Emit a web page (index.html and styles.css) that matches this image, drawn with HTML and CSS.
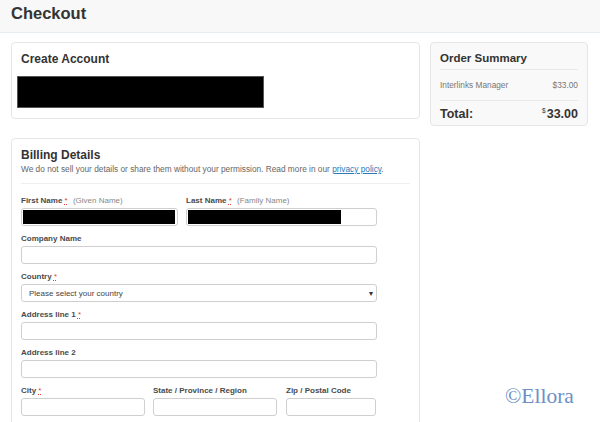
FILE: index.html
```html
<!DOCTYPE html>
<html>
<head>
<meta charset="utf-8">
<link rel="stylesheet" href="styles.css">
</head>
<body>
<header class="topbar"><h1>Checkout</h1></header>
<main class="layout">
  <div class="col-main">
    <section class="card account">
      <h2>Create Account</h2>
      <div class="redact"></div>
    </section>
    <section class="card billing">
      <h2>Billing Details</h2>
      <p class="note">We do not sell your details or share them without your permission. Read more in our <a href="#">privacy policy</a>.</p>
      <hr class="sep">
      <div class="fields">
        <div class="row names">
          <div class="field"><label>First Name <abbr>*</abbr> <span class="hint">(Given Name)</span></label><div class="input"><div class="redact-in"></div></div></div>
          <div class="field"><label>Last Name <abbr>*</abbr> <span class="hint">(Family Name)</span></label><div class="input"><div class="redact-in short"></div></div></div>
        </div>
        <div class="field"><label>Company Name</label><div class="input"></div></div>
        <div class="field"><label>Country <abbr>*</abbr></label><div class="input select"><span>Please select your country</span><span class="caret">▾</span></div></div>
        <div class="field"><label>Address line 1 <abbr>*</abbr></label><div class="input"></div></div>
        <div class="field"><label>Address line 2</label><div class="input"></div></div>
        <div class="row city">
          <div class="field"><label>City <abbr>*</abbr></label><div class="input"></div></div>
          <div class="field"><label>State / Province / Region</label><div class="input"></div></div>
          <div class="field"><label>Zip / Postal Code</label><div class="input"></div></div>
        </div>
      </div>
    </section>
  </div>
  <aside class="col-side">
    <section class="card summary">
      <h2>Order Summary</h2>
      <div class="line item"><span>Interlinks Manager</span><span>$33.00</span></div>
      <div class="line total"><span>Total:</span><span><sup>$</sup>33.00</span></div>
    </section>
  </aside>
</main>
<div class="watermark">©Ellora</div>
</body>
</html>
```
FILE: styles.css
```css
* { box-sizing: border-box; }
html, body { margin: 0; padding: 0; }
body {
  width: 600px;
  height: 422px;
  overflow: hidden;
  background: #fff;
  font-family: "Liberation Sans", Arial, sans-serif;
  color: #333;
  position: relative;
}
.topbar {
  height: 33px;
  background: #f8f8f8;
  border-bottom: 1px solid #e7ecf0;
  padding: 3px 11px 0;
}
.topbar h1 {
  margin: 0;
  font-size: 16.5px;
  line-height: 20px;
  font-weight: bold;
  color: #333;
}
.layout {
  display: flex;
  gap: 10px;
  padding: 9px 11px 0;
}
.col-main { width: 409px; display: flex; flex-direction: column; gap: 19px; }
.col-side { width: 158px; }
.card {
  border: 1px solid #e6e6e6;
  border-radius: 4px;
  background: #fff;
  padding: 8px 9px 10px;
}
.card h2 {
  margin: 0;
  font-size: 12px;
  line-height: 16px;
  font-weight: bold;
  color: #333;
}
.account { height: 77px; }
.redact {
  margin: 9px 0 0 -4px;
  width: 247px;
  height: 32px;
  background: #000;
  border: 1px solid #555;
}
.billing { height: 300px; }
.note {
  margin: 0;
  font-size: 8.3px;
  line-height: 12px;
  color: #666;
  white-space: nowrap;
}
.note a { color: #2a7ab8; text-decoration: underline; }
.sep {
  border: 0;
  border-top: 1px solid #eee;
  margin: 8px 0 0;
}
.fields {
  width: 356px;
  display: flex;
  flex-direction: column;
  gap: 6px;
  padding-top: 10px;
}
.row { display: grid; gap: 8px; }
.names { grid-template-columns: 157px 191px; }
.city { grid-template-columns: 124px 124px 91px; gap: 8px; }
.city .field:last-child { margin-left: 1px; }
.field { display: flex; flex-direction: column; gap: 1px; }
label {
  display: block;
  font-size: 8px;
  line-height: 13px;
  font-weight: bold;
  color: #4a4a4a;
  white-space: nowrap;
}
abbr {
  color: #d9443a;
  text-decoration: underline dotted;
  font-weight: normal;
}
.hint { font-weight: normal; color: #888; margin-left: 3px; }
.input {
  height: 18px;
  border: 1px solid #cfcfcf;
  border-radius: 3px;
  background: #fff;
  position: relative;
}
.redact-in {
  position: absolute;
  left: 1px; top: 1px; bottom: 1px;
  width: 152px;
  background: #000;
}
.redact-in.short { width: 153px; }
.select {
  display: flex;
  align-items: center;
  justify-content: space-between;
  padding: 0 3px 0 7px;
  font-size: 8px;
  color: #444;
}
.caret { font-size: 8px; color: #333; }
.summary {
  background: #f9f9f9;
  height: 84px;
  padding: 7px 9px 0;
}
.summary h2 { font-size: 11.5px; padding-bottom: 3px; border-bottom: 1px solid #e8e8e8; }
.line { display: flex; justify-content: space-between; align-items: center; }
.item {
  height: 31px;
  font-size: 8.3px;
  color: #777;
  border-bottom: 1px solid #e8e8e8;
}
.total {
  height: 25px;
  font-size: 12.5px;
  font-weight: bold;
  color: #333;
}
.total sup { font-size: 6.5px; font-weight: normal; vertical-align: 5px; margin-right: 1px; }
.watermark {
  position: absolute;
  left: 505px;
  top: 384px;
  font-family: "Liberation Serif", serif;
  font-size: 21.5px;
  color: #6d8fc4;
}
```
